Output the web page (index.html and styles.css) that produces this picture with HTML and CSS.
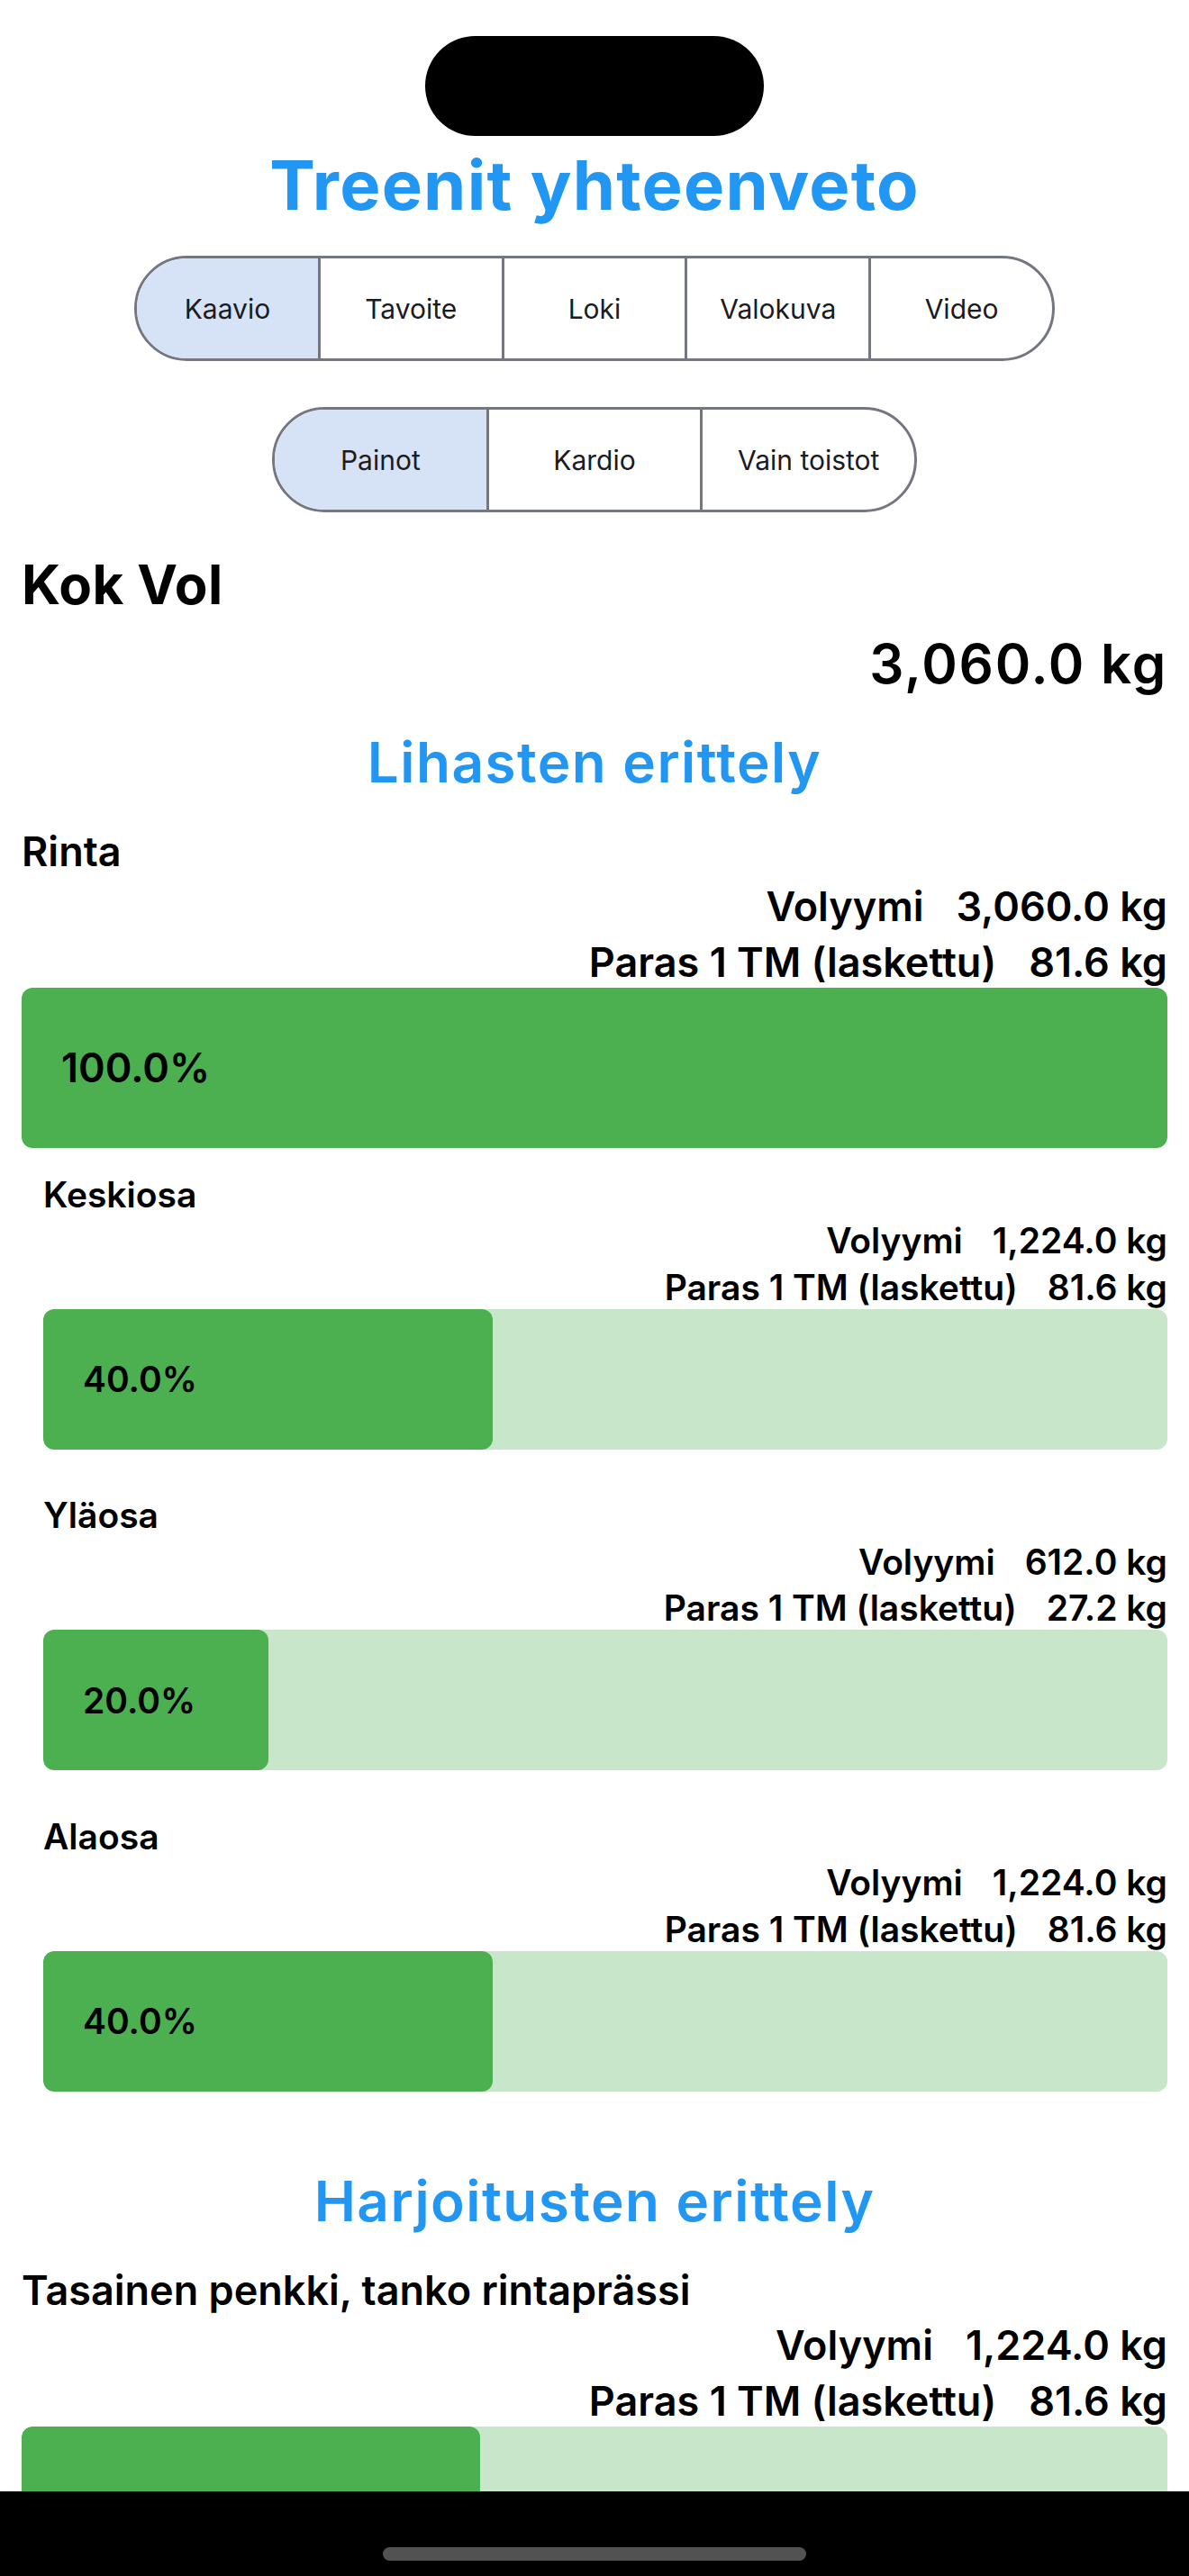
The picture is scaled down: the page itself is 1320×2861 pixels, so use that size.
FILE: index.html
```html
<!DOCTYPE html>
<html lang="fi">
<head>
<meta charset="utf-8">
<title>Treenit yhteenveto</title>
<link rel="stylesheet" href="styles.css">
</head>
<body>
<div class="screen">
  <div class="island"></div>
  <h1 class="title">Treenit yhteenveto</h1>

  <div class="seg seg-wide">
    <div class="seg-item selected">Kaavio</div>
    <div class="seg-item">Tavoite</div>
    <div class="seg-item">Loki</div>
    <div class="seg-item">Valokuva</div>
    <div class="seg-item">Video</div>
  </div>

  <div class="seg seg-narrow">
    <div class="seg-item selected">Painot</div>
    <div class="seg-item">Kardio</div>
    <div class="seg-item">Vain toistot</div>
  </div>

  <div class="content">
    <div class="kok-label">Kok Vol</div>
    <div class="kok-value">3,060.0 kg</div>

    <h2 class="section-title">Lihasten erittely</h2>

    <div class="group">
      <div class="group-name">Rinta</div>
      <div class="stat"><span>Volyymi</span><span>3,060.0 kg</span></div>
      <div class="stat"><span>Paras 1 TM (laskettu)</span><span>81.6 kg</span></div>
      <div class="bar"><div class="fill" style="width:100%"><span class="pct">100.0%</span></div></div>

      <div class="sub sub-first">
        <div class="sub-name">Keskiosa</div>
        <div class="stat stat-sub"><span>Volyymi</span><span>1,224.0 kg</span></div>
        <div class="stat stat-sub"><span>Paras 1 TM (laskettu)</span><span>81.6 kg</span></div>
        <div class="bar bar-sub"><div class="fill" style="width:40%"><span class="pct">40.0%</span></div></div>
      </div>

      <div class="sub">
        <div class="sub-name">Yläosa</div>
        <div class="stat stat-sub"><span>Volyymi</span><span>612.0 kg</span></div>
        <div class="stat stat-sub"><span>Paras 1 TM (laskettu)</span><span>27.2 kg</span></div>
        <div class="bar bar-sub"><div class="fill" style="width:20%"><span class="pct">20.0%</span></div></div>
      </div>

      <div class="sub">
        <div class="sub-name">Alaosa</div>
        <div class="stat stat-sub"><span>Volyymi</span><span>1,224.0 kg</span></div>
        <div class="stat stat-sub"><span>Paras 1 TM (laskettu)</span><span>81.6 kg</span></div>
        <div class="bar bar-sub"><div class="fill" style="width:40%"><span class="pct">40.0%</span></div></div>
      </div>
    </div>

    <h2 class="section-title section-second">Harjoitusten erittely</h2>

    <div class="group">
      <div class="group-name">Tasainen penkki, tanko rintaprässi</div>
      <div class="stat"><span>Volyymi</span><span>1,224.0 kg</span></div>
      <div class="stat"><span>Paras 1 TM (laskettu)</span><span>81.6 kg</span></div>
      <div class="bar"><div class="fill" style="width:40%"><span class="pct">40.0%</span></div></div>
    </div>
  </div>

  <div class="home-bar"><div class="home-indicator"></div></div>
</div>
</body>
</html>
```
FILE: styles.css
```css
* { box-sizing: border-box; }

html, body {
  margin: 0;
  padding: 0;
  background: #ffffff;
}

body {
  font-family: Inter, "Noto Sans", "Liberation Sans", sans-serif;
  color: #000000;
}

.screen {
  position: relative;
  width: 1320px;
  height: 2861px;
  overflow: hidden;
  display: flex;
  flex-direction: column;
  align-items: center;
}

.island {
  margin-top: 40px;
  width: 376px;
  height: 111px;
  border-radius: 56px;
  background: #000000;
  flex-shrink: 0;
}

.title {
  margin: 14px 0 0;
  font-size: 76px;
  line-height: 80px;
  font-weight: 700;
  color: #2196f3;
  letter-spacing: 1.2px;
}

.seg {
  display: flex;
  height: 117px;
  border: 3px solid #74777f;
  border-radius: 59px;
  overflow: hidden;
  flex-shrink: 0;
}

.seg-wide {
  margin-top: 39px;
  width: 1022px;
}

.seg-narrow {
  margin-top: 51px;
  width: 716px;
}

.seg-item {
  flex: 1 1 0;
  display: flex;
  align-items: center;
  justify-content: center;
  font-size: 30px;
  font-weight: 400;
  color: #1b1b21;
  border-left: 3px solid #74777f;
  white-space: nowrap;
}

.seg-item:first-child { border-left: none; }

.seg-item.selected { background: #d6e3f6; }

.content {
  width: 100%;
  padding: 0 24px;
  display: flex;
  flex-direction: column;
}

.kok-label {
  margin-top: 44px;
  font-size: 60px;
  line-height: 72px;
  font-weight: 700;
  letter-spacing: 0.4px;
}

.kok-value {
  margin-top: 16px;
  font-size: 60px;
  line-height: 72px;
  font-weight: 600;
  letter-spacing: 1.8px;
  text-align: right;
}

.section-title {
  margin: 35.5px 0 0;
  font-size: 62px;
  line-height: 76px;
  font-weight: 600;
  color: #2196f3;
  letter-spacing: 1.45px;
  text-align: center;
}

.section-second { margin-top: 84px; }

.group {
  display: flex;
  flex-direction: column;
}

.group-name {
  margin-top: 33px;
  font-size: 45px;
  line-height: 56px;
  font-weight: 600;
}

.stat {
  margin-top: 5.5px;
  display: flex;
  justify-content: flex-end;
  gap: 36px;
  font-size: 45px;
  line-height: 56px;
  font-weight: 600;
}

.bar {
  height: 178px;
  border-radius: 12px;
  background: #c8e6c9;
  overflow: hidden;
  display: flex;
}

.fill {
  height: 100%;
  background: #4caf50;
  border-radius: 12px;
  display: flex;
  align-items: center;
  padding-left: 44px;
}

.pct {
  font-size: 45px;
  font-weight: 600;
  white-space: nowrap;
}

.sub {
  margin-top: 49.5px;
  padding-left: 24px;
  display: flex;
  flex-direction: column;
}

.sub-first { margin-top: 28px; }

.sub-name {
  font-size: 39px;
  line-height: 48px;
  font-weight: 600;
}

.stat-sub {
  margin-top: 3.5px;
  font-size: 39px;
  line-height: 48px;
  gap: 33px;
}

.bar-sub { height: 156px; }

.bar-sub .pct { font-size: 39px; }

.home-bar {
  position: absolute;
  left: 0;
  right: 0;
  bottom: 0;
  height: 94px;
  background: #000000;
  display: flex;
  justify-content: center;
}

.home-indicator {
  margin-top: 62px;
  width: 470px;
  height: 15px;
  border-radius: 8px;
  background: #525252;
}
```
